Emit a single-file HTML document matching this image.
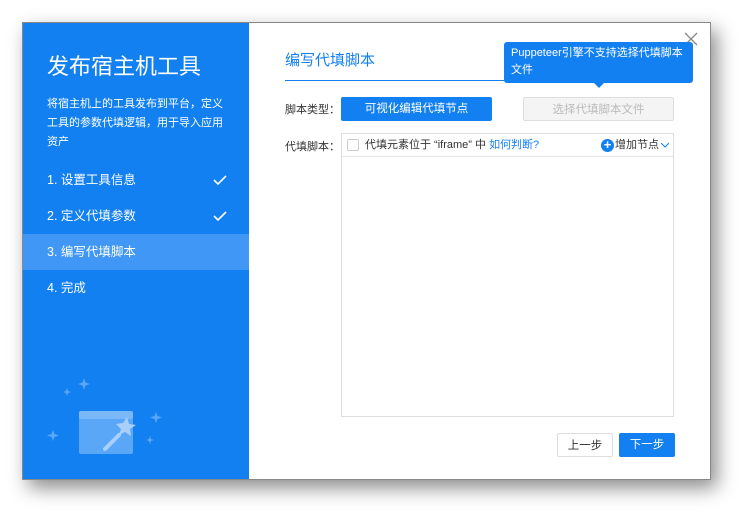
<!DOCTYPE html>
<html><head><meta charset="utf-8"><style>
*{margin:0;padding:0;box-sizing:border-box}
body{width:753px;height:523px;background:#fff;position:relative;overflow:hidden;font-family:"Liberation Sans","Noto Sans CJK SC",sans-serif}
.dlg{position:absolute;left:22px;top:22px;width:689px;height:458px;background:#fff;border:1px solid #888;box-shadow:6px 8px 18px rgba(0,0,0,.45)}
.left{position:absolute;left:0;top:0;width:226px;height:456px;background:#1380f2;color:#fff}
.t{position:absolute;left:24px;top:26px;font-size:22px}
.d{position:absolute;left:24px;top:72px;width:180px;font-size:11px;line-height:19px}
.step{position:absolute;left:0;width:226px;height:36px;line-height:36px;padding-left:24px;font-size:12.5px}
.step.a{background:#4097f5}
.ck{position:absolute;right:22px;top:0}
.abs{position:absolute}
.btn{position:absolute;height:24px;line-height:24px;text-align:center;font-size:11.5px;border-radius:2px}
</style></head><body>
<div class="dlg">
<div class="left">
<div class="t">发布宿主机工具</div>
<div class="d">将宿主机上的工具发布到平台，定义工具的参数代填逻辑，用于导入应用资产</div>
<div class="step" style="top:139px">1. 设置工具信息<svg class="ck" width="14" height="36" viewBox="0 0 14 36"><path d="M1 18l4 4 8-8" stroke="#fff" stroke-width="1.6" fill="none"/></svg></div>
<div class="step" style="top:175px">2. 定义代填参数<svg class="ck" width="14" height="36" viewBox="0 0 14 36"><path d="M1 18l4 4 8-8" stroke="#fff" stroke-width="1.6" fill="none"/></svg></div>
<div class="step a" style="top:211px">3. 编写代填脚本</div>
<div class="step" style="top:247px">4. 完成</div>
<svg class="abs" style="left:18px;top:355px" width="130" height="80" viewBox="0 0 130 80">
<g fill="#5aa6f7">
<path d="M43 0l1.5 4.5L49 6l-4.5 1.5L43 12l-1.5-4.5L37 6l4.5-1.5z"/>
<path d="M26 10l1 3 3 1-3 1-1 3-1-3-3-1 3-1z"/>
<path d="M12 52l1.5 4L18 57.5l-4.5 1.5L12 63l-1.5-4L6 57.5l4.5-1.5z"/>
<path d="M115 34l1.5 4 4.5 1.5-4.5 1.5-1.5 4-1.5-4-4.5-1.5 4.5-1.5z"/>
<path d="M109 58l1 3 3 1-3 1-1 3-1-3-3-1 3-1z"/>
</g>
<rect x="38" y="33" width="54" height="43" rx="2" fill="#5aa6f7"/>
<rect x="38" y="33" width="54" height="8" rx="2" fill="#7ab8f9"/>
<path d="M82 45l4-6 2 7 7 1-6 4 1 7-6-4-6 3 2-6-5-5z" fill="#a8d0fb"/>
<path d="M78 57L64 71" stroke="#a8d0fb" stroke-width="4" stroke-linecap="round"/>
</svg>
</div>
<div class="abs" style="left:262px;top:26px;font-size:15px;color:#1380f2">编写代填脚本</div>
<div class="abs" style="left:262px;top:57px;width:389px;height:1px;background:#1380f2"></div>
<svg class="abs" style="left:661px;top:9px" width="14" height="14"><path d="M1 1l12 12M13 1L1 13" stroke="#888" stroke-width="1.3"/></svg>
<div class="abs" style="left:481px;top:19px;width:189px;height:41px;background:#1380f2;color:#fff;font-size:11px;line-height:17px;padding:3px 7px;border-radius:3px">Puppeteer引擎不支持选择代填脚本文件</div>
<div class="abs" style="left:570px;top:59px;width:0;height:0;border:6px solid transparent;border-top-color:#1380f2"></div>
<div class="abs" style="left:262px;top:78px;font-size:11px;color:#333">脚本类型：</div>
<div class="btn" style="left:318px;top:74px;width:151px;background:#1380f2;color:#fff">可视化编辑代填节点</div>
<div class="btn" style="left:500px;top:74px;width:151px;background:#f4f4f4;border:1px solid #ddd;color:#bbb">选择代填脚本文件</div>
<div class="abs" style="left:262px;top:115px;font-size:11px;color:#333">代填脚本：</div>
<div class="abs" style="left:318px;top:110px;width:333px;height:284px;border:1px solid #ddd">
<div style="height:23px;border-bottom:1px solid #e6e6e6;font-size:11px;line-height:22px;color:#333;position:relative">
<span class="abs" style="left:5px;top:5px;width:12px;height:12px;border:1px solid #ccc;border-radius:2px;background:#fff"></span>
<span class="abs" style="left:23px;top:0">代填元素位于 “iframe” 中 <span style="color:#1380f2">如何判断?</span></span>
<span class="abs" style="left:259px;top:5px;width:13px;height:13px;border-radius:50%;background:#1380f2;color:#fff;font-size:13px;line-height:12px;text-align:center;font-weight:bold">+</span>
<span class="abs" style="left:273px;top:0">增加节点</span>
<svg class="abs" style="left:319px;top:8px" width="8" height="6"><path d="M0 1l4 4 4-4" stroke="#1380f2" fill="none"/></svg>
</div></div>
<div class="btn" style="left:534px;top:410px;width:56px;border:1px solid #ddd;color:#333;background:#fff">上一步</div>
<div class="btn" style="left:596px;top:410px;width:56px;background:#1380f2;color:#fff">下一步</div>
</div>
</body></html>
